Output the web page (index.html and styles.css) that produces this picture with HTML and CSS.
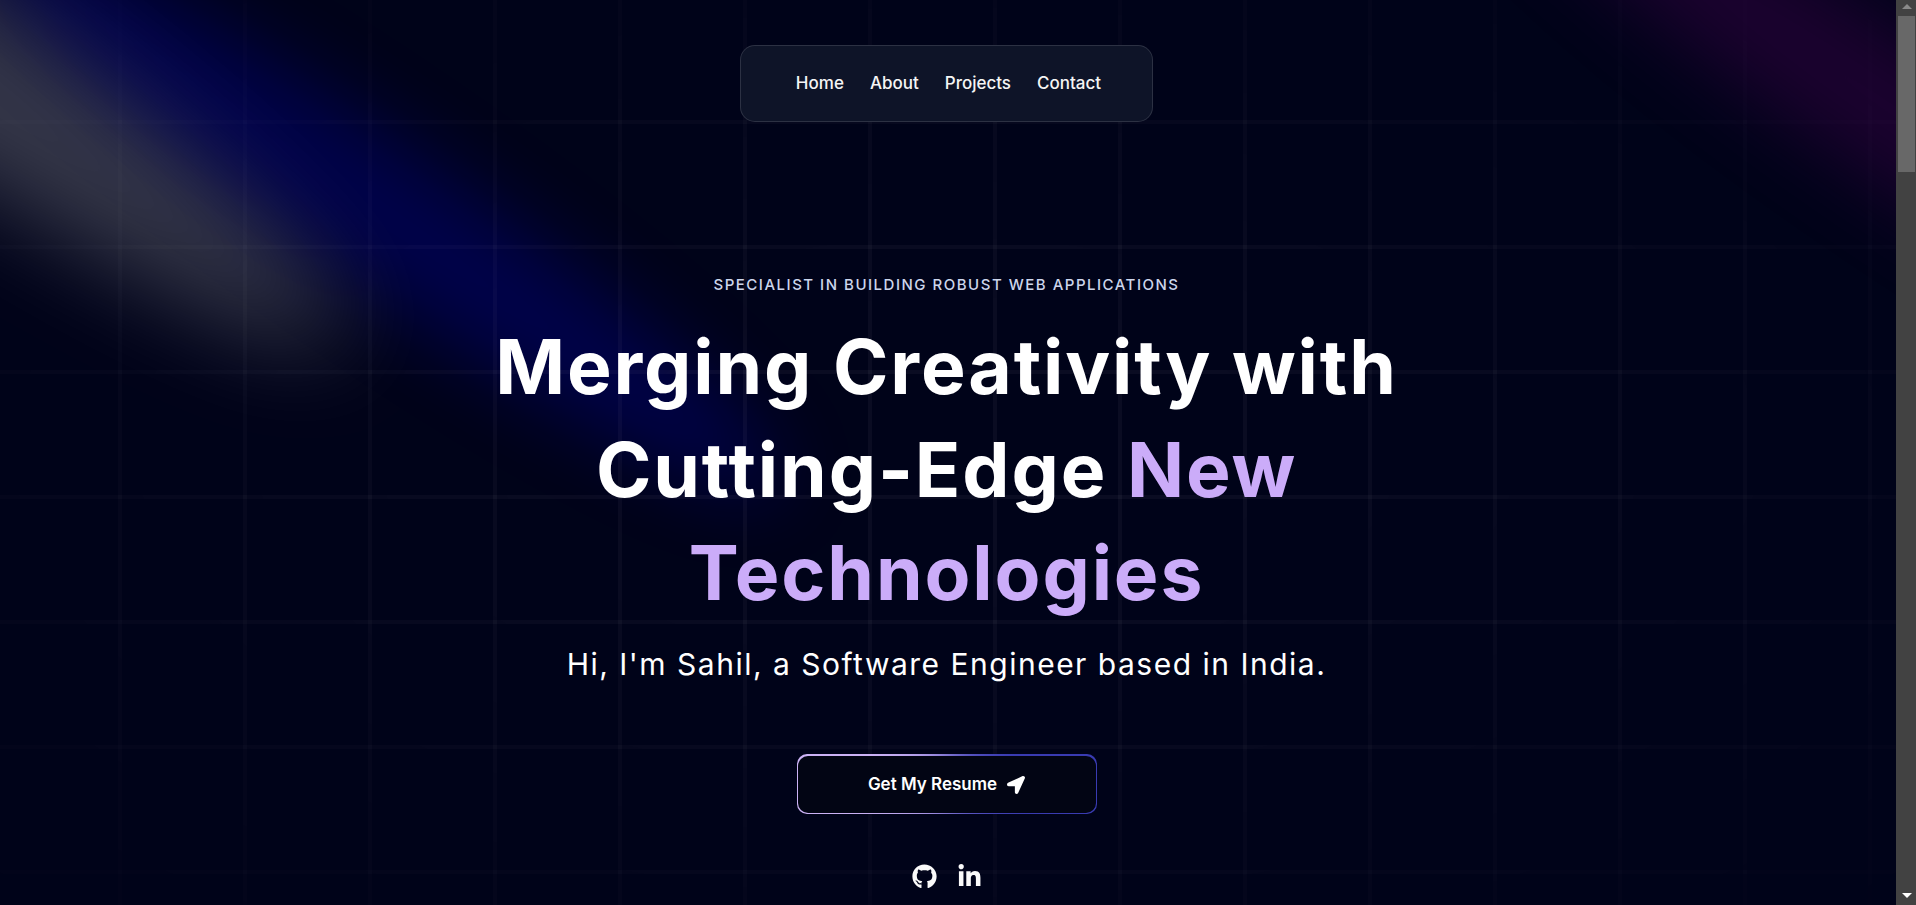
FILE: index.html
```html
<!DOCTYPE html>
<html lang="en">
<head>
<meta charset="utf-8">
<meta name="viewport" content="width=device-width, initial-scale=1">
<title>Sahil | Software Engineer</title>
<link rel="stylesheet" href="styles.css">
</head>
<body>
<div class="page">
  <div class="backdrop" aria-hidden="true">
    <svg class="spotlight spotlight-white" viewBox="0 0 3787 2842" fill="none">
      <defs>
        <filter id="soften" x="0" y="0" width="3787" height="2842" filterUnits="userSpaceOnUse" color-interpolation-filters="sRGB">
          <feGaussianBlur stdDeviation="151"/>
        </filter>
      </defs>
      <g filter="url(#soften)"><ellipse cx="1924.71" cy="273.501" rx="1924.71" ry="273.501" transform="matrix(-0.822377 -0.568943 -0.568943 0.822377 3631.88 2291.09)"/></g>
    </svg>
    <svg class="spotlight spotlight-purple" viewBox="0 0 3787 2842" fill="none">
      <g filter="url(#soften)"><ellipse cx="1924.71" cy="273.501" rx="1924.71" ry="273.501" transform="matrix(-0.822377 -0.568943 -0.568943 0.822377 3631.88 2291.09)"/></g>
    </svg>
    <svg class="spotlight spotlight-blue" viewBox="0 0 3787 2842" fill="none">
      <g filter="url(#soften)"><ellipse cx="1924.71" cy="273.501" rx="1924.71" ry="273.501" transform="matrix(-0.822377 -0.568943 -0.568943 0.822377 3631.88 2291.09)"/></g>
    </svg>
    <div class="grid-lines"></div>
  </div>

  <div class="content">
    <nav class="navbar" aria-label="Main">
      <a href="#home">Home</a>
      <a href="#about">About</a>
      <a href="#projects">Projects</a>
      <a href="#contact">Contact</a>
    </nav>

    <main class="hero" id="home">
      <p class="tagline">Specialist in building robust web applications</p>
      <h1 class="headline">Merging Creativity with Cutting-Edge <span class="accent">New Technologies</span></h1>
      <p class="intro">Hi, I'm Sahil, a Software Engineer based in India.</p>
      <button class="resume" type="button">
        <span class="resume-face">
          Get My Resume
          <svg class="arrow" viewBox="0 0 512 512" fill="currentColor" aria-hidden="true"><path d="M444.52 3.52L28.74 195.42c-47.97 22.39-31.98 92.75 19.19 92.75h175.91v175.91c0 51.17 70.36 67.17 92.75 19.19l191.9-415.78c15.99-38.39-25.59-79.97-63.97-63.95z"/></svg>
        </span>
      </button>
      <div class="socials">
        <a href="#github" aria-label="GitHub">
          <svg viewBox="0 0 496 512" fill="currentColor" aria-hidden="true"><path d="M165.9 397.4c0 2-2.3 3.6-5.2 3.6-3.3.3-5.6-1.3-5.6-3.6 0-2 2.3-3.6 5.2-3.6 3-.3 5.6 1.3 5.6 3.6zm-31.1-4.5c-.7 2 1.3 4.3 4.3 4.9 2.6 1 5.6 0 6.2-2s-1.3-4.3-4.3-5.2c-2.6-.7-5.5.3-6.2 2.3zm44.2-1.7c-2.9.7-4.9 2.6-4.6 4.9.3 2 2.9 3.3 5.9 2.6 2.9-.7 4.9-2.6 4.6-4.6-.3-1.9-3-3.2-5.9-2.9zM244.8 8C106.1 8 0 113.3 0 252c0 110.9 69.8 205.8 169.5 239.2 12.8 2.3 17.3-5.6 17.3-12.1 0-6.2-.3-40.4-.3-61.4 0 0-70 15-84.7-29.8 0 0-11.4-29.1-27.8-36.6 0 0-22.9-15.7 1.6-15.4 0 0 24.9 2 38.6 25.8 21.9 38.6 58.6 27.5 72.9 20.9 2.3-16 8.8-27.1 16-33.7-55.9-6.2-112.3-14.3-112.3-110.5 0-27.5 7.6-41.3 23.6-58.9-2.6-6.5-11.1-33.3 2.6-67.9 20.9-6.5 69 27 69 27 20-5.6 41.5-8.5 62.8-8.5s42.8 2.9 62.8 8.5c0 0 48.1-33.6 69-27 13.7 34.7 5.2 61.4 2.6 67.9 16 17.7 25.8 31.5 25.8 58.9 0 96.5-58.9 104.2-114.8 110.5 9.2 7.9 17 22.9 17 46.4 0 33.7-.3 75.4-.3 83.6 0 6.5 4.6 14.4 17.3 12.1C428.2 457.8 496 362.9 496 252 496 113.3 383.5 8 244.8 8z"/></svg>
        </a>
        <a href="#linkedin" aria-label="LinkedIn">
          <svg viewBox="0 0 448 512" fill="currentColor" aria-hidden="true"><path d="M100.28 448H7.4V148.9h92.88zM53.79 108.1C24.09 108.1 0 83.5 0 53.8a53.79 53.79 0 0 1 107.58 0c0 29.7-24.1 54.3-53.79 54.3zM447.9 448h-92.68V302.4c0-34.7-.7-79.2-48.29-79.2-48.29 0-55.69 37.7-55.69 76.7V448h-92.78V148.9h89.08v40.8h1.3c12.4-23.5 42.69-48.3 87.88-48.3 94 0 111.28 61.9 111.28 142.3V448z"/></svg>
        </a>
      </div>
    </main>
  </div>
</div>

<div class="scrollbar" aria-hidden="true">
  <svg class="scroll-up" viewBox="0 0 10 5"><path d="M5 0l5 5H0z"/></svg>
  <div class="scroll-track"><div class="scroll-thumb"></div></div>
  <svg class="scroll-down" viewBox="0 0 10 5"><path d="M0 0h10L5 5z"/></svg>
</div>
</body>
</html>
```
FILE: styles.css
```css
* {
  box-sizing: border-box;
}

body {
  margin: 0;
  display: flex;
  height: 100vh;
  overflow: hidden;
  background: #000319;
  color: #fff;
  font-family: Inter, "Liberation Sans", sans-serif;
}

a {
  color: inherit;
  text-decoration: none;
}

.page {
  position: relative;
  flex: 1;
  min-width: 0;
  overflow: hidden;
}

/* Background beams and grid */
.backdrop {
  position: absolute;
  inset: 0;
}

.spotlight {
  position: absolute;
  width: 50vw;
  height: 80vh;
  transform: translate(-50%, -40%);
  fill-opacity: 0.21;
}

.spotlight-white {
  left: -160px;
  top: -100px;
  width: 84%;
  height: 100vh;
  fill: white;
}

.spotlight-purple {
  left: 100%;
  top: 40px;
  fill: purple;
}

.spotlight-blue {
  left: 380px;
  top: 140px;
  fill: blue;
}

.grid-lines {
  position: absolute;
  inset: 0;
  background-image:
    linear-gradient(to right, rgba(255, 255, 255, 0.04) 4px, transparent 4px),
    linear-gradient(to bottom, rgba(255, 255, 255, 0.04) 4px, transparent 4px);
  background-size: 125px 125px;
  background-position: -7px -5px;
  mask-image: radial-gradient(ellipse at center, black 20%, transparent 110%);
}

/* Foreground */
.content {
  position: relative;
  display: flex;
  flex-direction: column;
  align-items: center;
  padding: 45px 3px 0 0;
}

.navbar {
  display: flex;
  gap: 26px;
  padding: 25px 51px 25px 55px;
  border: 1px solid rgba(255, 255, 255, 0.125);
  border-radius: 15px;
  background: #0e1428;
  color: #f5f5f5;
  font-size: 17px;
  font-weight: 500;
  line-height: 25px;
}

.hero {
  display: flex;
  flex-direction: column;
  align-items: center;
  max-width: 1000px;
  padding-top: 153px;
  text-align: center;
}

.tagline {
  margin: 0;
  color: #cdd6ec;
  font-size: 15px;
  font-weight: 500;
  line-height: 20px;
  letter-spacing: 0.1em;
  text-transform: uppercase;
}

.headline {
  margin: 20px 0 0;
  font-size: 75px;
  font-weight: 700;
  line-height: 103px;
  letter-spacing: 0.025em;
}

.accent {
  color: #cbacf9;
}

.intro {
  margin: 20px 0 0;
  font-size: 30px;
  line-height: 40px;
  letter-spacing: 0.05em;
}

.resume {
  width: 300px;
  height: 60px;
  margin-top: 70px;
  padding: 2px 1px 1px;
  border: 0;
  border-radius: 10px;
  background: conic-gradient(from 290deg, #cbb2f5 0%, #393bb2 38%, #393bb2 50%, #cbb2f5 90%);
  color: #fff;
  font: 600 17px/25px Inter, "Liberation Sans", sans-serif;
}

.resume-face {
  display: flex;
  align-items: center;
  justify-content: center;
  gap: 10px;
  height: 100%;
  border-radius: 10px;
  background: #020514;
}

.arrow {
  width: 18px;
  height: 18px;
}

.socials {
  display: flex;
  gap: 20px;
  margin-top: 50px;
  color: #fafafa;
}

.socials svg {
  display: block;
  width: 25px;
  height: 25px;
}

/* Window scrollbar */
.scrollbar {
  display: flex;
  flex-direction: column;
  align-items: center;
  width: 20px;
  padding: 4px 1px 7px 2px;
  background: #424242;
}

.scroll-up,
.scroll-down {
  width: 10px;
  height: 5px;
  fill: #8a8a8a;
}

.scroll-down {
  fill: #fff;
}

.scroll-track {
  flex: 1;
  width: 100%;
  padding-top: 7px;
}

.scroll-thumb {
  height: 156px;
  background: #686868;
}
```
